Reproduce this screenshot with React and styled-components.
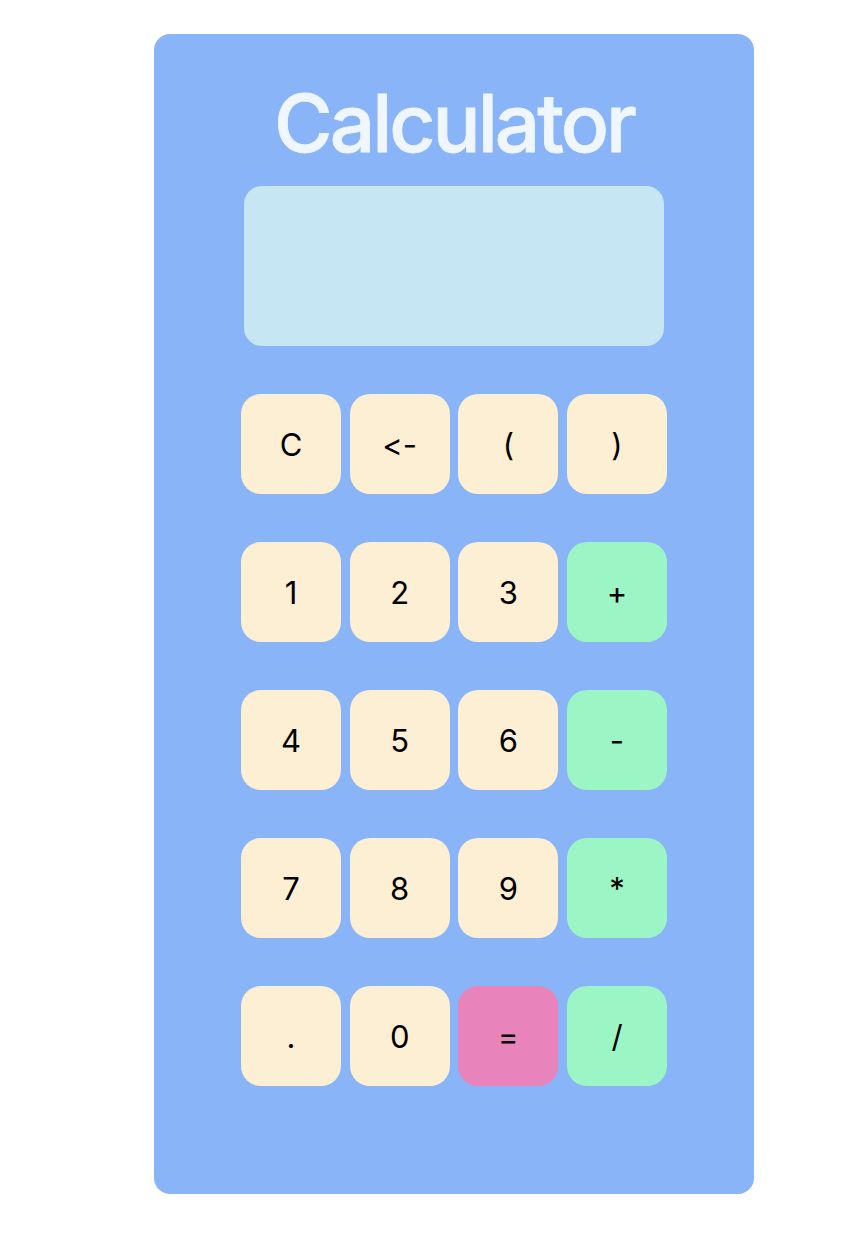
import React from "react";
import styled, { createGlobalStyle } from "styled-components";

const GlobalStyle = createGlobalStyle`
  html, body {
    margin: 0;
    padding: 0;
    background: #ffffff;
  }
  body {
    font-family: Inter, "Noto Sans", "Liberation Sans", sans-serif;
  }
`;

const Page = styled.div`
  padding: 34px 0 46px 154px;
`;

const Card = styled.div`
  width: 600px;
  height: 1160px;
  box-sizing: border-box;
  background: #89b5f8;
  border-radius: 16px;
  padding-top: 41px;
  display: flex;
  flex-direction: column;
  align-items: center;
`;

const Title = styled.h1`
  margin: 0 0 15px;
  font-size: 80px;
  line-height: 96px;
  font-weight: 500;
  letter-spacing: -3px;
  color: #eff6ff;
  -webkit-text-stroke: 0.8px #eff6ff;
`;

const Display = styled.div`
  width: 420px;
  height: 160px;
  background: #c5e6f2;
  border-radius: 18px;
  margin-bottom: 48px;
`;

const Keypad = styled.div`
  display: grid;
  grid-template-columns: repeat(4, 100px);
  grid-auto-rows: 100px;
  column-gap: 8.67px;
  row-gap: 48px;
`;

const tones = {
  plain: "#fcefd3",
  op: "#9cf5c4",
  eq: "#e983bc",
};

const Key = styled.button`
  border: none;
  padding: 0;
  margin: 0;
  border-radius: 20px;
  background: ${(p) => tones[p.$tone]};
  color: #000;
  font-family: Inter, "Noto Sans", "Liberation Sans", sans-serif;
  font-size: 31px;
  font-weight: 400;
  font-feature-settings: "calt" 0, "liga" 0;
  font-variant-ligatures: none;
  display: flex;
  align-items: center;
  justify-content: center;
  cursor: pointer;
`;

const keys = [
  ["C", "plain"], ["<-", "plain"], ["(", "plain"], [")", "plain"],
  ["1", "plain"], ["2", "plain"], ["3", "plain"], ["+", "op"],
  ["4", "plain"], ["5", "plain"], ["6", "plain"], ["-", "op"],
  ["7", "plain"], ["8", "plain"], ["9", "plain"], ["*", "op"],
  [".", "plain"], ["0", "plain"], ["=", "eq"], ["/", "op"],
];

export default function App() {
  return (
    <>
      <GlobalStyle />
      <Page>
        <Card>
          <Title>Calculator</Title>
          <Display />
          <Keypad>
            {keys.map(([label, tone]) => (
              <Key key={label} $tone={tone}>
                {label}
              </Key>
            ))}
          </Keypad>
        </Card>
      </Page>
    </>
  );
}
